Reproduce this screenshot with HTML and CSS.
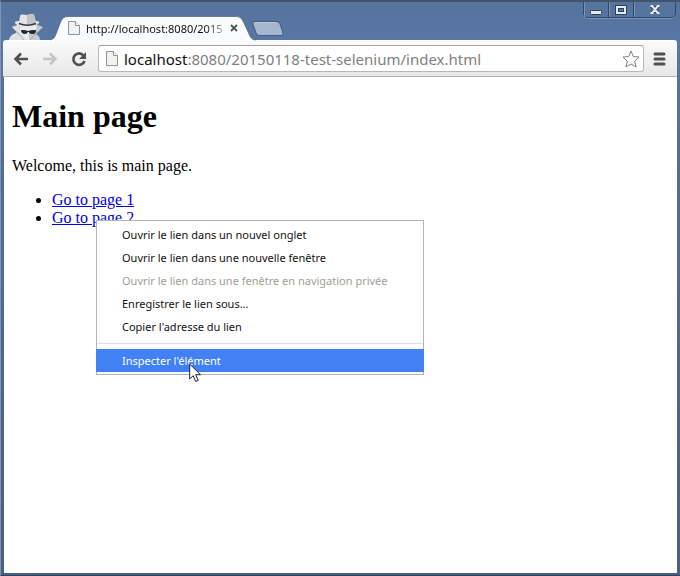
FILE: index.html
```html
<!DOCTYPE html>
<html lang="fr">
<head>
<meta charset="utf-8">
<title>Main page</title>
<link rel="stylesheet" href="styles.css">
</head>
<body>
<div class="window">
  <header class="titlebar">
    <svg class="incognito" width="36" height="28" viewBox="0 0 36 28" aria-hidden="true">
      <path d="M0 28Q1 23 7 21L8 20L3 15L10 12H26L34 15L29 20L27 22Q31 24 31 28Z" fill="#c3c8ce"/>
      <path d="M3 15L10 13L11 20L18 28H0Q1 23 7 21L8 20Z" fill="#dde1e5"/>
      <path d="M11 14H28L26 21L20 28H18L11 21Z" fill="#e9ebed"/>
      <path d="M20 20H27L25 24L20 28Z" fill="#c2c6cb"/>
      <path d="M6 11Q5 9 10 9H27Q31 9 30 11Q26 15 18 15Q9 15 6 11Z" fill="#e6e8ea"/>
      <path d="M10 11L11 4Q11 2 14 2.500L18 3L22 2Q25 1.500 25.500 4L27 11Q18 15 10 11Z" fill="#e2e4e6"/>
      <path d="M18 3L22 2Q25 1.500 25.500 4L27 11Q23 13 18 13Z" fill="#c0c4c8"/>
      <path d="M10 11.500Q18 15 27 11.500" fill="none" stroke="#36383e" stroke-width="1.500"/>
      <path d="M12 18Q16 17.500 19 19Q22 17.500 27 18Q27 22 24 22Q20 22 20 20H19Q18 22 16 22Q12 22 12 18Z" fill="#25282e"/>
      <path d="M8 20L15 28M28 20L21 28" fill="none" stroke="#a1a8b0"/>
    </svg>
    <div class="tab">
      <svg class="tab-shape" viewBox="0 0 206 25" preserveAspectRatio="none" aria-hidden="true">
        <path d="M0 24C4 23 5 21 6 18L11 5Q13 .5 17 .5H187Q191 .5 193 5L199 18Q201 24 206 24V25H0Z" fill="#fafbfc"/>
        <path d="M0 24C4 23 5 21 6 18L11 5Q13 .5 17 .5H187Q191 .5 193 5L199 18Q201 24 206 24" fill="none" stroke="#405a80" stroke-opacity=".65"/>
      </svg>
      <svg class="page-icon" width="12" height="14" viewBox="0 0 12 14" aria-hidden="true"><path d="M.5 .5H7.500L11.500 4.500V13.500H.5Z" fill="#f0f1f2" stroke="#929292"/><path d="M7.500 .5V4.500H11.500" fill="#fff" stroke="#929292"/></svg>
      <span class="tab-title">http://localhost:8080/2015</span>
      <button class="tab-close" aria-label="Fermer l'onglet"><svg width="8" height="8" viewBox="0 0 8 8"><path d="M1 1L7 7M7 1L1 7" stroke="#505050" stroke-width="1.800"/></svg></button>
    </div>
    <button class="new-tab" aria-label="Nouvel onglet"><svg width="32" height="15" viewBox="0 0 32 15"><path d="M3 .5H24Q27 .5 28 3L31 12Q31.500 14.500 29 14.500H8Q5 14.500 4 12L.8 3Q0 .5 3 .5Z" fill="#a4b7cf" stroke="#425c82"/><path d="M3 1.500H24" stroke="#bccadc"/></svg></button>
    <div class="window-controls">
      <button aria-label="Réduire"><svg width="12" height="14" viewBox="0 0 12 14"><rect x=".5" y="7.500" width="11" height="4" rx="1" fill="#e5eaf0" stroke="#29405f"/></svg></button>
      <button aria-label="Agrandir"><svg width="12" height="14" viewBox="0 0 12 14"><rect x="2" y="4" width="8" height="6" fill="none" stroke="#29405f" stroke-width="4"/><rect x="2" y="4" width="8" height="6" fill="none" stroke="#e5eaf0" stroke-width="2"/></svg></button>
      <button class="close" aria-label="Fermer"><svg width="12" height="14" viewBox="0 0 12 14"><path d="M3 3L9 10M9 3L3 10" stroke="#29405f" stroke-width="4"/><path d="M3 3L9 10M9 3L3 10M1.500 3H4.500M7.500 3H10.500M1.500 10H4.500M7.500 10H10.500" stroke="#e5eaf0" stroke-width="2"/></svg></button>
    </div>
  </header>
  <nav class="toolbar" aria-label="Navigation">
    <button aria-label="Retour"><svg width="16" height="14" viewBox="0 0 16 14"><path d="M15 7H2M8 1.500L2.500 7L8 12.500" fill="none" stroke="#505050" stroke-width="2.500"/></svg></button>
    <button aria-label="Avancer" disabled><svg width="16" height="14" viewBox="0 0 16 14"><path d="M1 7H14M8 1.500L13.500 7L8 12.500" fill="none" stroke="#c5c5c5" stroke-width="2.500"/></svg></button>
    <button aria-label="Actualiser"><svg width="16" height="16" viewBox="0 0 16 16"><path d="M12.500 4.500A5.700 5.700 0 1 0 13.500 10" fill="none" stroke="#505050" stroke-width="2.700"/><path d="M15 1V8H8Z" fill="#505050"/></svg></button>
    <div class="address">
      <svg class="page-icon" width="12" height="15" viewBox="0 0 12 15" aria-hidden="true"><path d="M.5 .5H7.500L11.500 4.500V14.500H.5Z" fill="#f0f1f2" stroke="#929292"/><path d="M7.500 .5V4.500H11.500" fill="#fff" stroke="#929292"/></svg>
      <span class="url" role="textbox" aria-label="Adresse" contenteditable="true" spellcheck="false"><span class="host">localhost</span>:8080/20150118-test-selenium/index.html</span>
      <button aria-label="Ajouter aux favoris"><svg width="20" height="18" viewBox="0 0 20 18"><path d="M10 1L12.300 6.500L18 7L13.700 11.300L15.200 17L10 14L4.800 17L6.300 11.300L2 7L7.700 6.500Z" fill="#fff" stroke="#808080" stroke-linejoin="round"/></svg></button>
    </div>
    <button class="menu-button" aria-label="Menu"><svg width="14" height="14" viewBox="0 0 14 14"><path d="M2 2H11M2 7H11M2 12H11" stroke="#505050" stroke-width="3" stroke-linecap="round"/></svg></button>
  </nav>
  <main class="page">
    <h1>Main page</h1>
    <p>Welcome, this is main page.</p>
    <ul>
      <li><a href="#page1">Go to page 1</a></li>
      <li><a href="#page2">Go to page 2</a></li>
    </ul>
  </main>
</div>
<div class="context-menu" role="menu">
  <button role="menuitem">Ouvrir le lien dans un nouvel onglet</button>
  <button role="menuitem">Ouvrir le lien dans une nouvelle fenêtre</button>
  <button role="menuitem" disabled>Ouvrir le lien dans une fenêtre en navigation privée</button>
  <button role="menuitem">Enregistrer le lien sous...</button>
  <button role="menuitem">Copier l'adresse du lien</button>
  <hr>
  <button role="menuitem" class="selected">Inspecter l'élément</button>
</div>
<svg class="cursor" width="13" height="20" viewBox="0 0 13 20" aria-hidden="true"><path d="M.7 1V16L4.200 12.700L6.700 18.500L9.200 17.400L6.700 11.700H11.500Z" fill="#fff" stroke="#1c2333"/></svg>
</body>
</html>
```
FILE: styles.css
```css
* {
  box-sizing: border-box;
}

body {
  margin: 0;
  font-family: "Noto Sans", "Open Sans", sans-serif;
}

button {
  margin: 0;
  padding: 0;
  border: 0;
  background: none;
  font: inherit;
}

svg {
  display: block;
  flex: none;
}

.window {
  display: flex;
  flex-direction: column;
  min-height: 100vh;
  padding: 0 3px 2px 2px;
  background: linear-gradient(#55739d, #5877a3 40px, #54719b 100px, #485f86);
  border-top: 2px solid #44526a;
  border-left: 1px solid #8194b2;
  border-bottom: 1px solid #34445f;
}

.titlebar {
  display: flex;
  align-items: flex-end;
  height: 38px;
}

.incognito {
  margin-left: 6px;
}

.tab {
  position: relative;
  display: flex;
  align-items: center;
  width: 206px;
  height: 24px;
  margin-left: 5px;
  padding: 0 18px;
}

.tab-shape {
  position: absolute;
  inset: 0;
  width: 100%;
  height: 25px;
}

.tab .page-icon,
.tab-close {
  position: relative;
}

.tab-title {
  position: relative;
  flex: 1;
  margin: 0 4px 0 6px;
  font-size: 11px;
  white-space: nowrap;
  color: #111;
  mask-image: linear-gradient(to right, #000 85%, #0004);
}

.new-tab {
  align-self: flex-end;
  margin: 0 0 4px -4px;
}

.window-controls {
  display: flex;
  align-self: flex-start;
  height: 16px;
  margin-left: auto;
  margin-right: 1px;
  border: 1px solid #2f4769;
  border-top: 0;
  border-radius: 0 0 5px 5px;
  box-shadow: 0 1px #7891b4;
}

.window-controls button {
  display: flex;
  align-items: center;
  justify-content: center;
  width: 25px;
  border-right: 1px solid #2f4769;
  box-shadow: inset 1px 0 #7891b4;
}

.window-controls .close {
  width: 41px;
  border: 0;
}

.toolbar {
  display: flex;
  align-items: center;
  height: 37px;
  padding: 0 10px;
  gap: 13px;
  border-top: 1px solid #fff;
  border-bottom: 1px solid #b4b4b4;
  border-radius: 3px 3px 0 0;
  background: linear-gradient(#fafafb, #e7e7e7);
}

.address {
  display: flex;
  flex: 1;
  align-items: center;
  height: 27px;
  margin-left: -2px;
  padding: 0 2px 0 7px;
  border: 1px solid #b8b8b8;
  border-top-color: #a2a2a2;
  border-radius: 3px;
  background: #fff;
}

.url {
  flex: 1;
  margin-left: 6px;
  font-size: 15px;
  line-height: 24px;
  white-space: nowrap;
  color: #808080;
}

.host {
  color: #111;
}

.menu-button {
  margin-left: -4px;
}

.page {
  flex: 1;
  margin-left: 1px;
  padding: 0 8px;
  background: #fff;
  color: #000;
  font: 16px/18px "Liberation Serif", serif;
}

.page h1 {
  margin: 21px 0 22px;
  font-size: 32px;
  line-height: 37px;
}

.page p {
  margin: 0 0 16px;
}

.page ul {
  margin: 0;
  padding-left: 40px;
}

.page a {
  color: #0000e0;
}

.context-menu {
  position: absolute;
  top: 220px;
  left: 96px;
  width: 328px;
  padding: 2px 0;
  border: 1px solid #b4b4b4;
  background: #fff;
}

.context-menu button {
  display: block;
  width: 100%;
  height: 23px;
  padding-left: 25px;
  font-size: 11px;
  line-height: 23px;
  text-align: left;
  white-space: nowrap;
  color: #111;
}

.context-menu button:disabled {
  color: #a0a096;
}

.context-menu hr {
  margin: 5px 0;
  border: 0;
  border-top: 1px solid #dedede;
}

.context-menu .selected {
  width: auto;
  min-width: calc(100% + 2px);
  margin: 0 -1px;
  padding-left: 26px;
  background: #4281f4;
  color: #fff;
}

.cursor {
  position: absolute;
  top: 363px;
  left: 189px;
}
```
